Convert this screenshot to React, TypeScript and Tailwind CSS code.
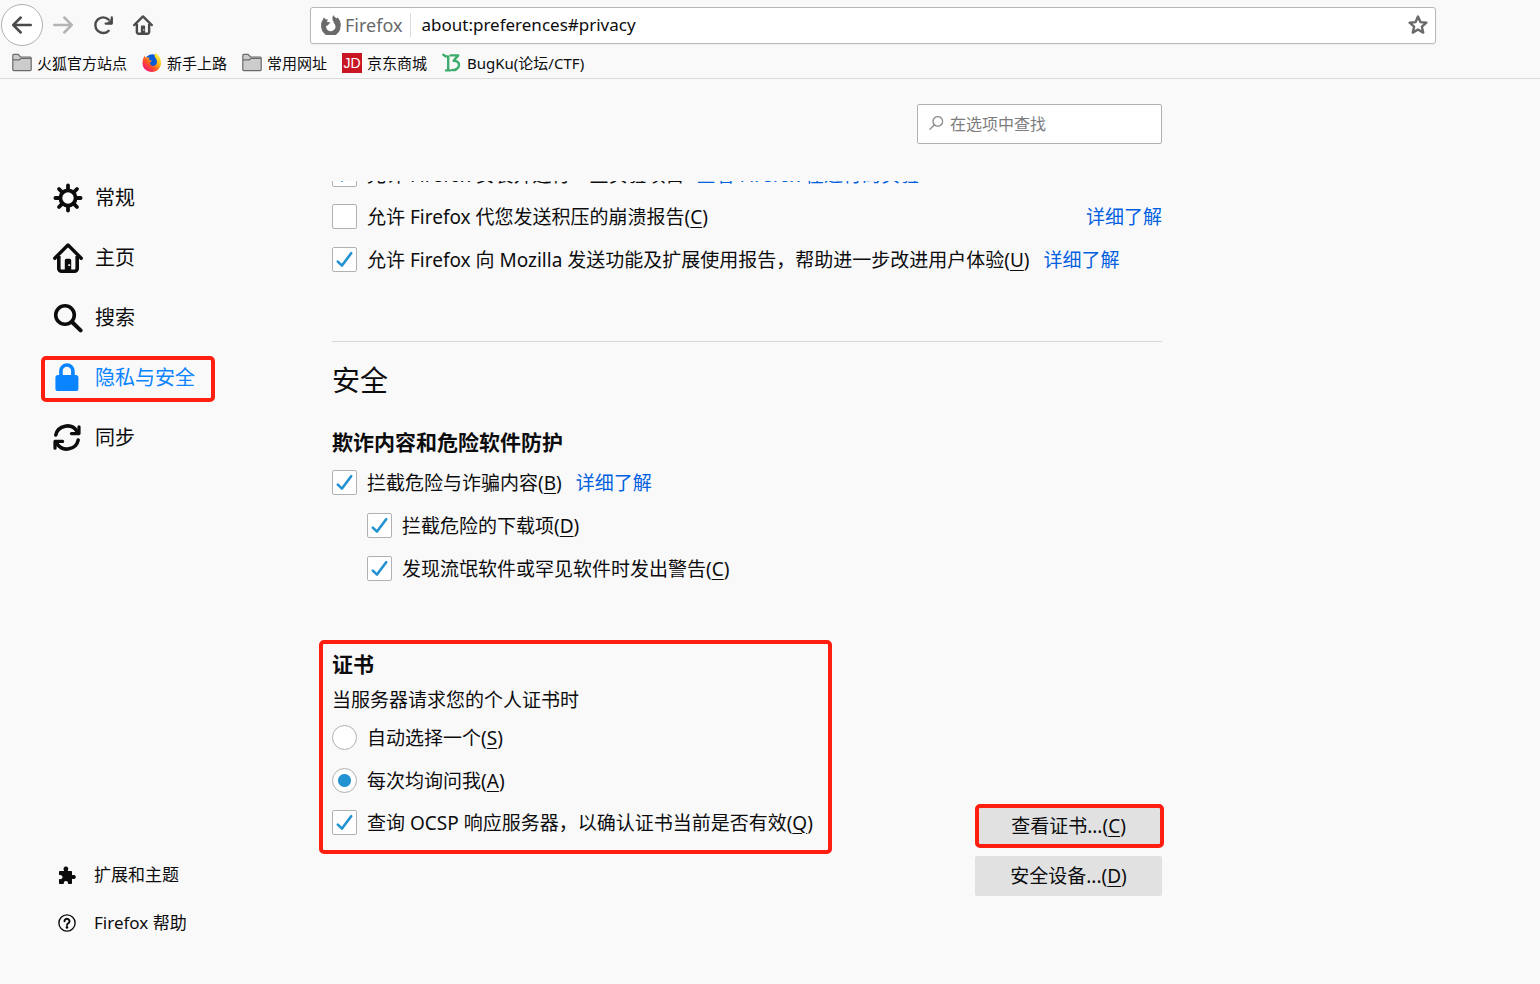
import React, { useState } from 'react';

const BackIcon = ({ className }: { className: string }) => (
  <svg viewBox="0 0 16 16" className={className} fill="currentColor" aria-hidden="true">
    <path d="M15 7H3.414l4.293-4.293a1 1 0 0 0-1.414-1.414l-6 6a1 1 0 0 0 0 1.414l6 6a1 1 0 0 0 1.414-1.414L3.414 9H15a1 1 0 0 0 0-2z" />
  </svg>
);

const ReloadIcon = () => (
  <svg viewBox="0 0 20 20" className="size-5" fill="none" stroke="currentColor" strokeWidth="2.4" strokeLinecap="round" aria-hidden="true">
    <path d="M15.6 15.8A7.8 7.8 0 1 1 15.600 4.600" />
    <path d="M18.8 2.400v6.200h-6.200" strokeWidth="2.2" strokeLinejoin="round" />
    <path d="M18.8 4v4.600h-4.600z" fill="currentColor" strokeWidth="1" />
  </svg>
);

const HomeIcon = ({ className }: { className: string }) => (
  <svg viewBox="0 0 30 30" className={className} fill="none" stroke="currentColor" aria-hidden="true">
    <path d="M1.8 15.2 15 2l13.2 13.2" strokeWidth="3.4" strokeLinecap="round" strokeLinejoin="round" />
    <path d="M5.8 13v12.5a2.7 2.7 0 0 0 2.7 2.7h13a2.7 2.7 0 0 0 2.7-2.7V13" strokeWidth="3.6" />
    <path d="M11.8 28V17.3a1.5 1.5 0 0 1 1.5-1.5h3.4a1.5 1.5 0 0 1 1.5 1.5V28zM15.3 21.2v1.9h1.8v-1.9z" fill="currentColor" fillRule="evenodd" stroke="none" />
  </svg>
);

const StarIcon = () => (
  <svg viewBox="0 0 20 20" className="size-5" fill="none" stroke="currentColor" strokeWidth="2.4" strokeLinejoin="round" aria-hidden="true">
    <path d="M10 1.6l2.4 5.5 6 .6-4.5 4 1.3 5.9L10 14.5l-5.2 3.1 1.3-5.900-4.500-4 6-.6z" />
  </svg>
);

const GearIcon = () => (
  <svg viewBox="0 0 30 30" className="size-[30px]" fill="none" stroke="currentColor" aria-hidden="true">
    <circle cx="15" cy="15" r="7.6" strokeWidth="3.8" />
    <path d="M15 2.400v4M15 23.600v4M2.400 15h4M23.600 15h4M6 6l2.600 2.600M21.400 21.400l2.600 2.600M6 24l2.600-2.600M21.400 8.600l2.600-2.600" strokeWidth="3.8" strokeLinecap="round" />
  </svg>
);

const SearchIcon = () => (
  <svg viewBox="0 0 30 30" className="size-[30px]" fill="none" stroke="currentColor" strokeLinecap="round" aria-hidden="true">
    <circle cx="12" cy="12" r="9.3" strokeWidth="3.6" />
    <path d="M19 19l8.6 8.4" strokeWidth="4" />
  </svg>
);

const LockIcon = () => (
  <svg viewBox="0 0 30 30" className="size-[30px]" fill="none" stroke="currentColor" aria-hidden="true">
    <rect x="2.4" y="12" width="23" height="16" rx="2.6" fill="currentColor" stroke="none" />
    <path d="M7.9 13V8a6 6 0 0 1 12 0v5" strokeWidth="3.6" />
  </svg>
);

const SyncIcon = () => (
  <svg viewBox="0 0 30 30" className="size-[30px]" fill="none" stroke="currentColor" strokeWidth="3.6" strokeLinecap="round" aria-hidden="true">
    <path d="M2.800 12A11.600 11.200 0 0 1 24 8.200" />
    <path d="M26 3.800v6.800h-7.600" strokeWidth="3.200" strokeLinejoin="round" />
    <path d="M25.200 17A11.600 11.200 0 0 1 4 20.800" />
    <path d="M2 25.200v-6.800h7.600" strokeWidth="3.200" strokeLinejoin="round" />
  </svg>
);

const PuzzleIcon = () => (
  <svg viewBox="0 0 18 18" className="size-[18px]" fill="currentColor" aria-hidden="true">
    <path d="M2 5h3.400c.5 0 .7-.4.500-.8A2.300 2.300 0 0 1 7.900.600a2.300 2.300 0 0 1 2 3.600c-.2.4 0 .8.500.8H13c.6 0 1 .4 1 1v2.600c0 .5.4.7.8.500a2.100 2.100 0 1 1 0 3.800c-.4-.2-.8 0-.8.500V17c0 .6-.4 1-1 1h-2.400c-.5 0-.7-.4-.5-.8a2.200 2.200 0 1 0-4.400 0c.2.4 0 .8-.5.8H2c-.6 0-1-.4-1-1v-3.400c0-.5.400-.7.800-.5a2.100 2.100 0 1 0 0-4c-.4.2-.8 0-.8-.5V6c0-.6.4-1 1-1z" />
  </svg>
);

const HelpIcon = () => (
  <svg viewBox="0 0 18 18" className="size-[18px]" fill="none" stroke="currentColor" aria-hidden="true">
    <circle cx="9" cy="9" r="8.1" strokeWidth="1.4" />
    <path d="M6.5 7.2a2.5 2.4 0 1 1 3.9 2c-.9.6-1.4.9-1.4 1.8" strokeWidth="2" strokeLinecap="round" />
    <circle cx="9" cy="13.4" r="1.3" fill="currentColor" stroke="none" />
  </svg>
);

const FolderIcon = () => (
  <svg viewBox="0 0 20 20" className="size-5" fill="#cccccd" stroke="#6b6b6c" strokeWidth="1.2" strokeLinejoin="round" aria-hidden="true">
    <path d="M.8 16.6V2.4c0-.6.4-1 1-1h4.4L8.6 4h9.6c.6 0 1 .4 1 1v11.6c0 .6-.4 1-1 1H1.8c-.6 0-1-.4-1-1z" />
    <path d="M1 6.8h6.4L9 5.4h10" fill="none" />
  </svg>
);

const FirefoxMark = () => (
  <svg viewBox="0 0 20 20" className="size-5" fill="currentColor" aria-hidden="true">
    <path d="M13.800 5.600A7.200 7.200 0 1 1 4.400 6.800" fill="none" stroke="currentColor" strokeWidth="5" />
    <path d="M12.600 0c.4 1.800 1.800 2.400 3.200 3.400l.6-1.200c2.200 2 3.600 5 3.400 8.600l-5 .2c.2-2-.6-3.400-2-4.200-1.600-1-2-4.600-.2-6.800z" />
    <path d="M2.800 2.200l2 2.200 2.200-.2L5.800 6.800l3.600.8-3 3.200L.2 10.400C.2 7.600.8 5.800 2 4.400z" />
  </svg>
);

const FirefoxLogo = () => (
  <svg viewBox="0 0 20 20" className="size-5" aria-hidden="true">
    <defs>
      <linearGradient id="fox" x1="0.9" y1="0.1" x2="0.2" y2="0.9">
        <stop offset="0" stopColor="#fff44f" />
        <stop offset="0.35" stopColor="#ffbd1a" />
        <stop offset="0.65" stopColor="#ff5a1f" />
        <stop offset="1" stopColor="#f5156c" />
      </linearGradient>
    </defs>
    <circle cx="10.500" cy="8.600" r="7.400" fill="#0a5bd8" />
    <path d="M13 0c3.500 1.700 6 5.200 6 9.700 0 5.200-4 9.300-9.100 9.300S.5 15.100.5 10.200C.5 7 1.300 4.300 3 2.500c0 1 .3 1.700.8 2.200C5.200 4 6.700 4.300 7.600 5c-.6.7-.8 1.300-.6 2l2.400.4c.5.100.5.600.1.900L8 9.500c-.1 2.500 1.800 3.700 3.900 3.300 2.300-.4 3.500-2.500 3-5C14.500 5.500 12.500 4.500 12.500 2.500c0-.9.100-1.700.5-2.500z" fill="url(#fox)" />
  </svg>
);

const JdLogo = () => (
  <span className="flex size-5 items-center justify-center bg-[#c91623] font-['Liberation_Sans',sans-serif] text-sm leading-5 text-white">JD</span>
);

const BugKuLogo = () => (
  <svg viewBox="0 0 20 20" className="size-5" fill="none" stroke="#3dab6b" strokeWidth="2.4" strokeLinecap="round" strokeLinejoin="round" aria-hidden="true">
    <path d="M1.400 1.800l2.400 1.600h2.400v13.400M4 17.400h4" />
    <path d="M8.600 2.400h7.600l-4.600 5.400c4 0 5.600 1.800 5.400 4.600-.3 3.200-4 5.200-6.800 4.600" />
  </svg>
);

const Key = ({ k }: { k: string }) => (
  <>(<span className="underline decoration-1 underline-offset-3">{k}</span>)</>
);

const Highlight = ({ className }: { className: string }) => (
  <div className={`pointer-events-none absolute rounded-[5px] border-4 border-[#ff1e10] ${className}`} />
);

const LearnMore = ({ className }: { className: string }) => (
  <a href="#more" className={`text-[#0060df] ${className}`}>详细了解</a>
);

interface CheckRowProps {
  checked?: boolean;
  label: string;
  accessKey?: string;
  height?: string;
  children?: React.ReactNode;
}

const CheckRow: React.FC<CheckRowProps> = ({ checked = false, label, accessKey, height = 'h-[43px]', children }) => {
  const [on, setOn] = useState(checked);
  return (
    <div className={`flex items-center whitespace-nowrap ${height}`}>
      <label className="flex items-center gap-2.5">
        <span className="relative size-[25px] shrink-0">
          <input
            type="checkbox"
            checked={on}
            onChange={() => setOn(!on)}
            className="block size-[25px] appearance-none rounded-[2px] border border-[#b1b1b1] bg-white"
          />
          {on && (
            <svg viewBox="0 0 25 25" className="pointer-events-none absolute inset-0" fill="none" stroke="#2292d0" strokeWidth="2.6" strokeLinecap="round" strokeLinejoin="round" aria-hidden="true">
              <path d="M5.800 14.600l4.200 4L19.200 6.200" />
            </svg>
          )}
        </span>
        <span>{label}{accessKey && <Key k={accessKey} />}</span>
      </label>
      {children}
    </div>
  );
};

const categories = [
  { id: 'general', label: '常规', icon: <GearIcon /> },
  { id: 'home', label: '主页', icon: <HomeIcon className="size-[30px]" /> },
  { id: 'search', label: '搜索', icon: <SearchIcon /> },
  { id: 'privacy', label: '隐私与安全', icon: <LockIcon /> },
  { id: 'sync', label: '同步', icon: <SyncIcon /> },
];

const bookmarks = [
  { label: '火狐官方站点', icon: <FolderIcon /> },
  { label: '新手上路', icon: <FirefoxLogo /> },
  { label: '常用网址', icon: <FolderIcon /> },
  { label: '京东商城', icon: <JdLogo /> },
  { label: 'BugKu(论坛/CTF)', icon: <BugKuLogo /> },
];

const certChoices = [
  { id: 'auto', label: '自动选择一个', accessKey: 'S' },
  { id: 'ask', label: '每次均询问我', accessKey: 'A' },
];

const Toolbar = () => (
  <header className="border-b border-[#dcdcdc] bg-[#f9f9fa] text-[#4a4a4b]">
    <div className="flex items-center pt-1 pr-[104px] pl-px">
      <button aria-label="后退" className="flex size-[42px] items-center justify-center rounded-full border border-[#b1b1b1] bg-white">
        <BackIcon className="size-5" />
      </button>
      <div className="ml-2.5 flex items-center gap-5">
        <button aria-label="前进" className="text-[#b4b4b5]"><BackIcon className="size-5 rotate-180" /></button>
        <button aria-label="刷新"><ReloadIcon /></button>
        <button aria-label="主页"><HomeIcon className="size-5" /></button>
      </div>
      <div className="ml-[157px] flex h-[37px] flex-1 items-center rounded-[3px] border border-[#b8b8b9] bg-white pr-[7px] pl-2.5 shadow-xs">
        <span className="flex items-center gap-1 text-lg leading-6 text-[#6a6a6b]">
          <FirefoxMark />
          Firefox
        </span>
        <input
          aria-label="地址"
          defaultValue="about:preferences#privacy"
          className="ml-2 h-6 min-w-0 flex-1 border-l border-[#dcdcdc] pl-2.5 text-[17px] text-[#0c0c0d] outline-none"
        />
        <button aria-label="添加书签" className="text-[#6a6a6b]"><StarIcon /></button>
      </div>
    </div>
    <nav className="flex h-8 items-center gap-[15px] pt-0.5 pl-3 text-[15px] text-[#0c0c0d]">
      {bookmarks.map((b) => (
        <a key={b.label} href="#bookmark" className="flex items-center gap-[5px] whitespace-nowrap">
          {b.icon}
          <span>{b.label}</span>
        </a>
      ))}
    </nav>
  </header>
);

const Sidebar = () => (
  <aside className="flex w-[332px] shrink-0 flex-col pt-[89px] pb-[37px]">
    <nav className="flex flex-col">
      {categories.map((c) => (
        <a
          key={c.id}
          href={`#${c.id}`}
          className={`relative flex h-[60px] items-center gap-3 pl-[53px] text-xl ${c.id === 'privacy' ? 'text-[#0a84ff]' : 'text-[#0c0c0d]'}`}
        >
          {c.icon}
          <span>{c.label}</span>
          {c.id === 'privacy' && <Highlight className="top-2 left-[41px] h-[46px] w-[174px]" />}
        </a>
      ))}
    </nav>
    <div className="mt-auto flex flex-col text-[17px]">
      <a href="#addons" className="flex h-12 items-center gap-[18px] pl-[58px]">
        <PuzzleIcon />
        <span>扩展和主题</span>
      </a>
      <a href="#help" className="flex h-12 items-center gap-[18px] pl-[58px]">
        <HelpIcon />
        <span>Firefox 帮助</span>
      </a>
    </div>
  </aside>
);

const App: React.FC = () => {
  const [cert, setCert] = useState('ask');

  return (
    <div className="flex min-h-screen flex-col bg-[#f9f9fa] font-['Noto_Sans','Noto_Sans_CJK_SC',sans-serif] text-[#0c0c0d]">
      <Toolbar />
      <div className="flex flex-1">
        <Sidebar />
        <main className="max-w-[830px] flex-1 pt-[25px] text-[19px] leading-7">
          <label className="ml-auto flex h-10 w-[245px] items-center gap-1.5 rounded-[2px] border border-[#b1b1b1] bg-white pl-2.5">
            <svg viewBox="0 0 16 16" className="size-4" fill="none" stroke="#8a8a8b" strokeWidth="1.3" strokeLinecap="round" aria-hidden="true">
              <circle cx="9.800" cy="5.400" r="4.800" />
              <path d="M6.200 9L1.800 13.400" />
            </svg>
            <input
              type="search"
              aria-label="在选项中查找"
              placeholder="在选项中查找"
              className="min-w-0 flex-1 bg-transparent text-base outline-none placeholder:text-[#7d7d7e]"
            />
          </label>

          {/* list is scrolled, so the first row is only partly visible */}
          <div className="mt-[37px] overflow-hidden">
            <section className="-mt-[27px]">
              <CheckRow checked height="h-[41px]" label="允许 Firefox 安装并运行一些实验项目">
                <a href="#studies" className="ml-3 text-[#0060df]">查看 Firefox 在进行的实验</a>
              </CheckRow>
              <CheckRow label="允许 Firefox 代您发送积压的崩溃报告" accessKey="C">
                <LearnMore className="ml-auto" />
              </CheckRow>
              <CheckRow checked label="允许 Firefox 向 Mozilla 发送功能及扩展使用报告，帮助进一步改进用户体验" accessKey="U">
                <LearnMore className="ml-3.5" />
              </CheckRow>
            </section>
          </div>

          <h1 className="mt-[60px] border-t border-[#d7d7db] pt-[18px] text-[28px] leading-10">安全</h1>

          <section className="mt-7">
            <h2 className="mb-[5px] text-[21px] leading-7 font-bold">欺诈内容和危险软件防护</h2>
            <CheckRow checked label="拦截危险与诈骗内容" accessKey="B">
              <LearnMore className="ml-3.5" />
            </CheckRow>
            <div className="pl-[35px]">
              <CheckRow checked label="拦截危险的下载项" accessKey="D" />
              <CheckRow checked label="发现流氓软件或罕见软件时发出警告" accessKey="C" />
            </div>
          </section>

          <section className="relative mt-[60px]">
            <h2 className="text-[21px] leading-7 font-bold">证书</h2>
            <p className="mt-2 mb-0.5">当服务器请求您的个人证书时</p>
            <div role="radiogroup" aria-label="当服务器请求您的个人证书时">
              {certChoices.map((c) => (
                <label key={c.id} className="flex h-[43px] items-center gap-2.5">
                  <input
                    type="radio"
                    name="cert"
                    checked={cert === c.id}
                    onChange={() => setCert(c.id)}
                    className="size-[25px] appearance-none rounded-full border border-[#b1b1b1] bg-white checked:bg-[radial-gradient(circle,#2292d0_6px,#fff_7px)]"
                  />
                  <span>{c.label}<Key k={c.accessKey} /></span>
                </label>
              ))}
            </div>
            <div className="flex items-start justify-between">
              <CheckRow checked height="h-[41px]" label="查询 OCSP 响应服务器，以确认证书当前是否有效" accessKey="Q" />
              <div className="flex w-[187px] flex-col gap-2.5 pt-1">
                <button className="relative h-10 rounded-[2px] bg-[#e1e1e2]">
                  查看证书...<Key k="C" />
                  <Highlight className="-inset-y-0.5 -right-0.5 left-0" />
                </button>
                <button className="h-10 rounded-[2px] bg-[#e1e1e2]">
                  安全设备...<Key k="D" />
                </button>
              </div>
            </div>
            <Highlight className="-top-2.5 -left-[13px] h-[214px] w-[513px]" />
          </section>
        </main>
      </div>
    </div>
  );
};

export default App;
